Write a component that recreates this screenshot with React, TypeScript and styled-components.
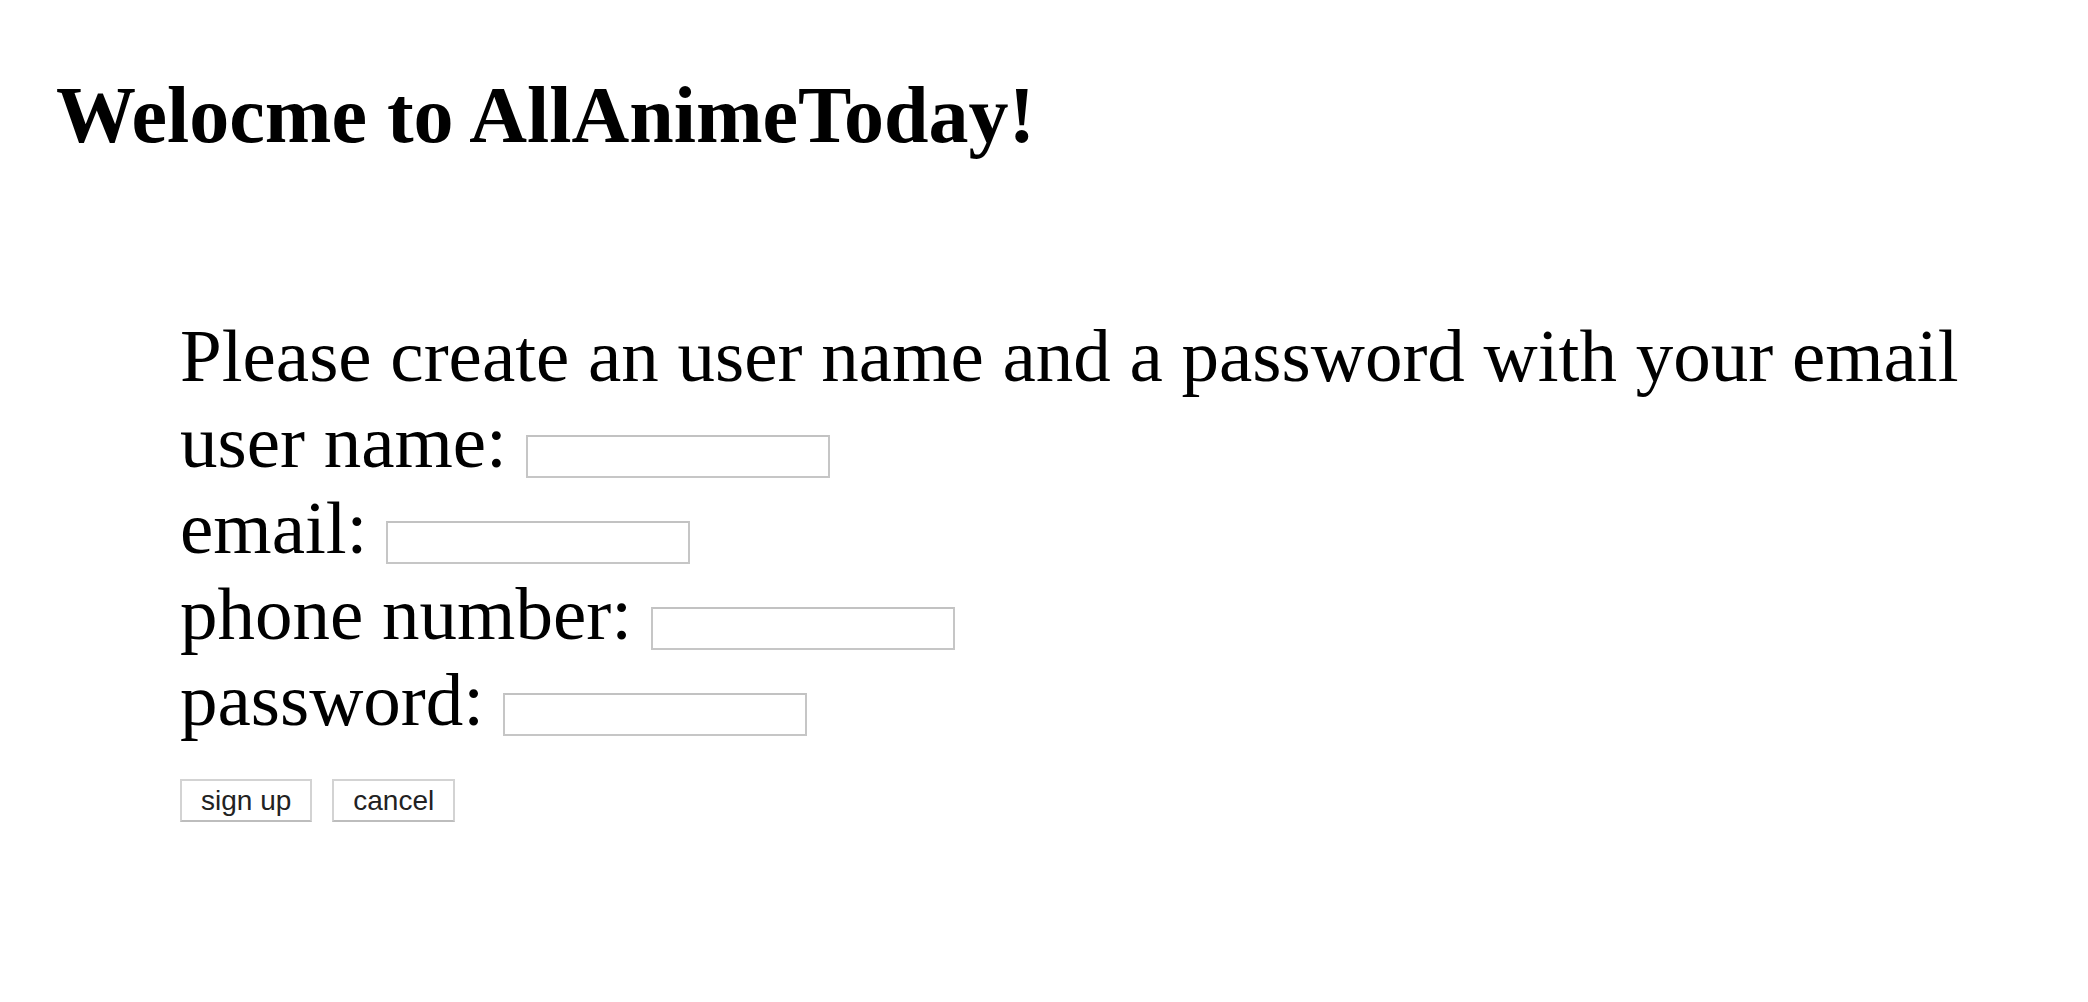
import React from 'react';
import styled, { createGlobalStyle } from 'styled-components';

const GlobalStyle = createGlobalStyle`
  html, body {
    margin: 0;
    padding: 0;
    background: #ffffff;
  }
  body {
    font-family: "Liberation Serif", "Times New Roman", serif;
    color: #000000;
  }
`;

const Page = styled.div`
  padding: 0 56px;
`;

const Title = styled.h1`
  margin: 0;
  padding-top: 70px;
  font-size: 80px;
  font-weight: bold;
  line-height: normal;
`;

const SignupForm = styled.form`
  margin: 152px 0 0 124px;
  font-size: 75px;
  line-height: 86px;
`;

const Line = styled.div`
  white-space: nowrap;
`;

const Field = styled.input`
  box-sizing: border-box;
  width: 304px;
  height: 43px;
  margin: 36px 0 0 0;
  vertical-align: top;
  border: 2px solid #c6c6c6;
  border-top-color: #c2c2c2;
  background: #ffffff;
  padding: 2px 4px;
  font-family: "Liberation Sans", Arial, sans-serif;
  font-size: 26px;
  outline: none;
`;

const Actions = styled.div`
  display: flex;
  gap: 20px;
  margin-top: 36px;
`;

const Button = styled.button`
  box-sizing: border-box;
  height: 43px;
  padding: 0 19px;
  background: #ffffff;
  border: 2px solid #d3d3d3;
  border-bottom-color: #bdbdbd;
  border-radius: 0;
  font-family: "Liberation Sans", Arial, Helvetica, sans-serif;
  font-size: 28px;
  color: #222222;
  line-height: 1;
  cursor: pointer;
`;

const fields = [
  { label: 'user name:', type: 'text' },
  { label: 'email:', type: 'email' },
  { label: 'phone number:', type: 'tel' },
  { label: 'password:', type: 'password' },
];

const App: React.FC = () => {
  return (
    <Page>
      <GlobalStyle />
      <Title>Welocme to AllAnimeToday!</Title>
      <SignupForm onSubmit={e => e.preventDefault()}>
        <Line>Please create an user name and a password with your email</Line>
        {fields.map(f => (
          <Line key={f.label}>
            {f.label} <Field type={f.type} />
          </Line>
        ))}
        <Actions>
          <Button type="submit">sign up</Button>
          <Button type="button">cancel</Button>
        </Actions>
      </SignupForm>
    </Page>
  );
};

export default App;
